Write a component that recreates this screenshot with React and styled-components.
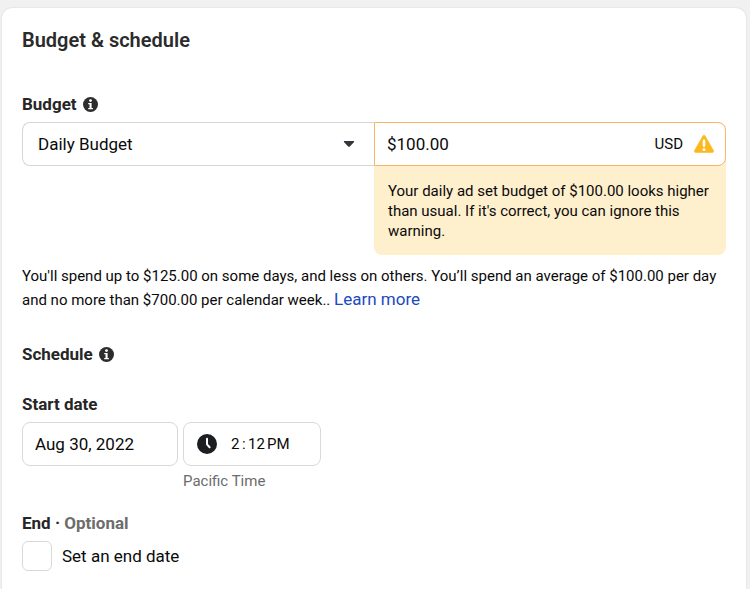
import React from "react";
import styled, { createGlobalStyle } from "styled-components";

const GlobalStyle = createGlobalStyle`
  * {
    box-sizing: border-box;
  }
  body {
    margin: 0;
    background: #f1f1f1;
    color: #0a0a0a;
    font-family: Roboto, "Liberation Sans", sans-serif;
    font-size: 15px;
  }
  input, select, button {
    font-family: inherit;
    color: inherit;
  }
`;

const Page = styled.div`
  display: flex;
  flex-direction: column;
  min-height: 100vh;
  padding: 8px 4px 0 2px;
`;

const Card = styled.main`
  flex: 1;
  padding: 20px 20px 18px;
  background: #fff;
  border-radius: 10px 10px 0 0;
  box-shadow: 0 0 2px rgba(0, 0, 0, 0.14);
`;

const Title = styled.h1`
  margin: 0 0 40px;
  font-size: 20px;
  font-weight: 600;
  line-height: 24px;
  color: #2b2b2b;
`;

const Heading = styled.h2`
  display: flex;
  align-items: center;
  gap: 6px;
  margin: 0 0 ${props => (props.$space ? props.$space : 6)}px;
  font-size: 17px;
  font-weight: 700;
  line-height: 24px;
  color: #262626;
`;

const Muted = styled.span`
  color: #6c6c6c;
`;

const InfoButton = styled.button`
  display: flex;
  padding: 0;
  border: none;
  background: transparent;
`;

const BudgetRow = styled.div`
  display: grid;
  grid-template-columns: 1fr 1fr;
  align-items: start;
`;

const SelectBox = styled.div`
  position: relative;

  svg {
    position: absolute;
    top: 18px;
    right: 19px;
    pointer-events: none;
  }
`;

const Select = styled.select`
  display: block;
  width: 100%;
  height: 44px;
  padding: 0 40px 0 15px;
  appearance: none;
  border: 1px solid #d6d6d6;
  border-right: none;
  border-radius: 8px 0 0 8px;
  background: #fff;
  font-size: 17px;
`;

const AmountColumn = styled.div`
  border-radius: 0 8px 8px 8px;
  background: #feefcd;
`;

const AmountField = styled.div`
  display: flex;
  align-items: center;
  height: 44px;
  padding: 0 11px 0 12px;
  border: 1px solid #f9b566;
  border-radius: 0 8px 8px 0;
  background: #fff;
`;

const AmountInput = styled.input`
  flex: 1;
  min-width: 0;
  padding: 0;
  border: none;
  outline: none;
  background: transparent;
  font-size: 17px;
`;

const Currency = styled.span`
  margin-right: 11px;
  font-size: 15px;
`;

const Warning = styled.p`
  margin: 0;
  padding: 15px 14px 14px;
  line-height: 20px;
`;

const Note = styled.p`
  margin: 9px 0 30px;
  line-height: 24px;
`;

const LearnMore = styled.a`
  display: inline-block;
  font-size: 17px;
  line-height: 20px;
  color: #2149c1;
  text-decoration: none;
`;

const StartRow = styled.div`
  display: flex;
  align-items: flex-start;
  gap: 5px;
  margin-bottom: 21px;
`;

const DateInput = styled.input`
  width: 156px;
  height: 44px;
  padding: 0 12px;
  border: 1px solid #d9d9d9;
  border-radius: 8px;
  font-size: 17px;
`;

const TimeField = styled.div`
  display: flex;
  align-items: center;
  width: 138px;
  height: 44px;
  padding: 0 13px;
  border: 1px solid #d9d9d9;
  border-radius: 8px;

  svg {
    margin-right: 14px;
  }
`;

const TimePart = styled.input`
  width: ${props => props.$width}px;
  padding: 0;
  border: none;
  outline: none;
  background: transparent;
  font-size: 15px;
`;

const Colon = styled.span`
  width: 6px;
  font-size: 15px;
`;

const Zone = styled.div`
  margin-top: 6px;
  line-height: 18px;
  color: #6c6c6c;
`;

const CheckRow = styled.label`
  display: flex;
  align-items: center;
  gap: 10px;
  font-size: 17px;
`;

const Checkbox = styled.input`
  width: 30px;
  height: 30px;
  margin: 0;
  appearance: none;
  border: 1px solid #d9d9d9;
  border-radius: 6px;
  background: #fff;

  &:checked {
    background: #2149c1;
  }
`;

const InfoIcon = () => (
  <svg width="15" height="15" viewBox="0 0 15 15">
    <circle cx="7.5" cy="7.5" r="7.5" fill="#2d2d2d" />
    <circle cx="7.5" cy="3.6" r="1.4" fill="#fff" />
    <path d="M5.2 6h3.4v5h1.3v1.2H5.2V11h1.3V7.2H5.2z" fill="#fff" />
  </svg>
);

const CaretIcon = () => (
  <svg width="12" height="8" viewBox="0 0 12 8">
    <path
      d="M1.6 1h8.8c.8 0 1 .7.5 1.2L6.8 6.4c-.5.5-1.1.5-1.6 0L1.1 2.2C.6 1.7.8 1 1.6 1z"
      fill="#33363d"
    />
  </svg>
);

const WarningIcon = () => (
  <svg width="20" height="18" viewBox="0 0 20 18">
    <path
      d="M8.6.9c.6-1.1 2.2-1.1 2.8 0l8.2 14.4c.6 1.1-.1 2.4-1.4 2.4H1.8C.5 17.7-.2 16.4.4 15.3z"
      fill="#fdb81e"
    />
    <path d="M10 5.8v5" stroke="#fff" strokeWidth="2.6" strokeLinecap="round" />
    <circle cx="10" cy="14.4" r="1.5" fill="#fff" />
  </svg>
);

const ClockIcon = () => (
  <svg width="20" height="20" viewBox="0 0 20 20">
    <circle cx="10" cy="10" r="10" fill="#1c1e21" />
    <path
      d="M10 4.8v5.6l2.6 2.8"
      fill="none"
      stroke="#fff"
      strokeWidth="2"
      strokeLinecap="round"
      strokeLinejoin="round"
    />
  </svg>
);

class App extends React.Component {
  state = {
    budgetType: "daily",
    amount: "$100.00",
    date: "Aug 30, 2022",
    hour: "2",
    minute: "12",
    period: "PM",
    hasEnd: false
  };

  handleChange = e => {
    this.setState({ [e.target.name]: e.target.value });
  };

  render() {
    const { budgetType, amount, date, hour, minute, period, hasEnd } = this.state;

    return (
      <Page>
        <GlobalStyle />
        <Card>
          <Title>Budget &amp; schedule</Title>

          <Heading>
            <label htmlFor="budgetType">Budget</label>
            <InfoButton type="button" aria-label="About budget">
              <InfoIcon />
            </InfoButton>
          </Heading>
          <BudgetRow>
            <SelectBox>
              <Select
                id="budgetType"
                name="budgetType"
                value={budgetType}
                onChange={this.handleChange}>
                <option value="daily">Daily Budget</option>
              </Select>
              <CaretIcon />
            </SelectBox>
            <AmountColumn>
              <AmountField>
                <AmountInput
                  name="amount"
                  aria-label="Budget amount"
                  aria-describedby="budgetWarning"
                  value={amount}
                  onChange={this.handleChange}
                />
                <Currency>USD</Currency>
                <WarningIcon />
              </AmountField>
              <Warning id="budgetWarning">
                Your daily ad set budget of $100.00 looks higher than usual. If
                it's correct, you can ignore this warning.
              </Warning>
            </AmountColumn>
          </BudgetRow>
          <Note>
            You'll spend up to $125.00 on some days, and less on others. You’ll
            spend an average of $100.00 per day and no more than $700.00 per
            calendar week.. <LearnMore href="#learn">Learn more</LearnMore>
          </Note>

          <Heading $space={26}>
            Schedule
            <InfoButton type="button" aria-label="About schedule">
              <InfoIcon />
            </InfoButton>
          </Heading>

          <Heading>
            <label htmlFor="date">Start date</label>
          </Heading>
          <StartRow>
            <DateInput id="date" name="date" value={date} onChange={this.handleChange} />
            <div>
              <TimeField role="group" aria-label="Start time">
                <ClockIcon />
                <TimePart
                  $width={11}
                  name="hour"
                  aria-label="Hour"
                  value={hour}
                  onChange={this.handleChange}
                />
                <Colon>:</Colon>
                <TimePart
                  $width={19}
                  name="minute"
                  aria-label="Minute"
                  value={minute}
                  onChange={this.handleChange}
                />
                <TimePart
                  $width={26}
                  name="period"
                  aria-label="AM or PM"
                  value={period}
                  onChange={this.handleChange}
                />
              </TimeField>
              <Zone>Pacific Time</Zone>
            </div>
          </StartRow>

          <Heading>
            <span>
              End · <Muted>Optional</Muted>
            </span>
          </Heading>
          <CheckRow>
            <Checkbox
              type="checkbox"
              checked={hasEnd}
              onChange={e => this.setState({ hasEnd: e.target.checked })}
            />
            Set an end date
          </CheckRow>
        </Card>
      </Page>
    );
  }
}

export default App;
